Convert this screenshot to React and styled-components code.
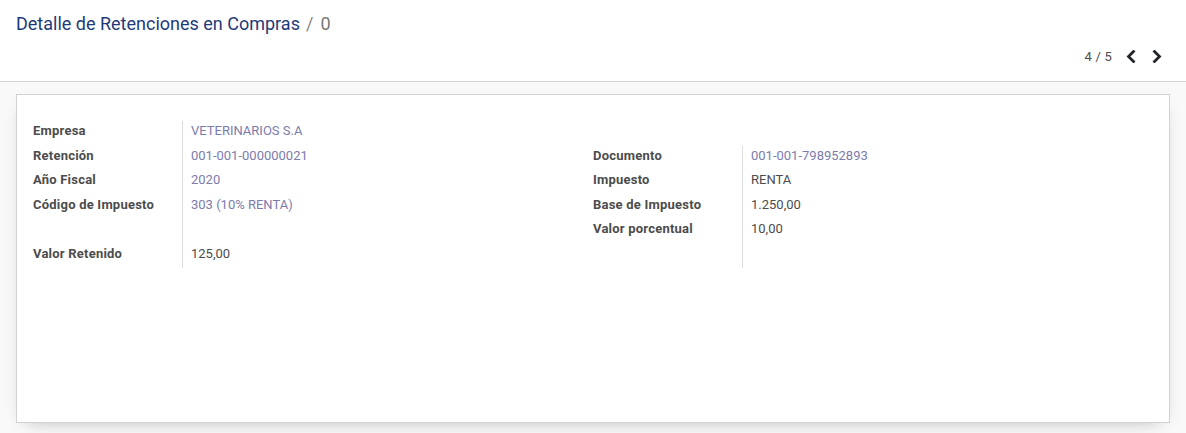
import React from 'react'
import styled, { createGlobalStyle } from 'styled-components'

const GlobalStyle = createGlobalStyle`
  html, body {
    margin: 0;
    padding: 0;
    height: 100%;
  }
  body {
    font-family: Roboto, "Noto Sans", "Liberation Sans", sans-serif;
    font-size: 13px;
    color: #4c4c4c;
    background: #fff;
  }
  #root {
    height: 100%;
  }
`

const Page = styled.div`
  height: 100vh;
  display: flex;
  flex-direction: column;
`

const ControlPanel = styled.div`
  padding: 10px 16px 10px;
  border-bottom: 1px solid #d2d2d2;
  background: #fff;
`

const Breadcrumb = styled.div`
  font-size: 18px;
  line-height: 27px;
  height: 27px;
  display: flex;
  align-items: center;
`

const BreadcrumbLink = styled.span`
  color: #1e3a7a;
`

const BreadcrumbActive = styled.span`
  color: #777;
  &::before {
    content: '/';
    padding: 0 7px 0 6px;
    color: #888;
  }
`

const PagerRow = styled.div`
  margin-top: 4px;
  height: 30px;
  display: flex;
  justify-content: flex-end;
  align-items: center;
`

const PagerValue = styled.span`
  font-size: 13px;
  color: #4c4c4c;
  margin-right: 6px;
  letter-spacing: 0.2px;
`

const PagerButton = styled.button`
  width: 26px;
  height: 30px;
  border: 0;
  background: transparent;
  padding: 0;
  display: flex;
  align-items: center;
  justify-content: center;
  cursor: pointer;
  color: #212529;
`

const Content = styled.div`
  flex: 1;
  background: #f9f9f9;
  padding: 12px 16px 10px;
  display: flex;
  flex-direction: column;
`

const Sheet = styled.div`
  flex: 1;
  background: #fff;
  border: 1px solid #d2d2d2;
  box-shadow: 0 6px 18px -10px rgba(0, 0, 0, 0.35);
  padding: 26px 16px 16px;
`

const Groups = styled.div`
  display: grid;
  grid-template-columns: 1fr 1fr;
`

const Group = styled.div`
  display: grid;
  grid-template-columns: 150px 1fr;
  align-content: start;
  margin-top: ${(p) => (p.$offset ? '24.5px' : '0')};
  padding-right: 16px;
`

const Label = styled.div`
  font-weight: 700;
  color: #4c4c4c;
  letter-spacing: 0.22px;
  line-height: 19.5px;
  padding: 0 0 5px;
  border-right: 1px solid #dcdcdc;
  min-height: 19.5px;
`

const Value = styled.div`
  line-height: 19.5px;
  padding: 0 0 5px 8px;
  min-height: 19.5px;
  color: ${(p) => (p.$link ? '#7c7bad' : '#4c4c4c')};
`

const Chevron = ({ dir }) => (
  <svg width="10" height="13" viewBox="0 0 10 13">
    <path
      d={dir === 'left' ? 'M7.5 1.5 L2.5 6.5 L7.5 11.5' : 'M2.5 1.5 L7.5 6.5 L2.5 11.5'}
      fill="none"
      stroke="currentColor"
      strokeWidth="2.8"
      strokeLinecap="square"
    />
  </svg>
)

const leftRows = [
  { label: 'Empresa', value: 'VETERINARIOS S.A', link: true },
  { label: 'Retención', value: '001-001-000000021', link: true },
  { label: 'Año Fiscal', value: '2020', link: true },
  { label: 'Código de Impuesto', value: '303 (10% RENTA)', link: true },
  { label: '', value: '' },
  { label: 'Valor Retenido', value: '125,00' },
]

const rightRows = [
  { label: 'Documento', value: '001-001-798952893', link: true },
  { label: 'Impuesto', value: 'RENTA' },
  { label: 'Base de Impuesto', value: '1.250,00' },
  { label: 'Valor porcentual', value: '10,00' },
  { label: '', value: '' },
]

const FieldGroup = ({ rows, offset }) => (
  <Group $offset={offset}>
    {rows.map((r, i) => (
      <React.Fragment key={i}>
        <Label>{r.label}</Label>
        <Value $link={r.link}>{r.value}</Value>
      </React.Fragment>
    ))}
  </Group>
)

export default function App() {
  return (
    <>
      <GlobalStyle />
      <Page>
        <ControlPanel>
          <Breadcrumb>
            <BreadcrumbLink>Detalle de Retenciones en Compras</BreadcrumbLink>
            <BreadcrumbActive>0</BreadcrumbActive>
          </Breadcrumb>
          <PagerRow>
            <PagerValue>4 / 5</PagerValue>
            <PagerButton aria-label="Anterior">
              <Chevron dir="left" />
            </PagerButton>
            <PagerButton aria-label="Siguiente">
              <Chevron dir="right" />
            </PagerButton>
          </PagerRow>
        </ControlPanel>
        <Content>
          <Sheet>
            <Groups>
              <FieldGroup rows={leftRows} />
              <FieldGroup rows={rightRows} offset />
            </Groups>
          </Sheet>
        </Content>
      </Page>
    </>
  )
}
